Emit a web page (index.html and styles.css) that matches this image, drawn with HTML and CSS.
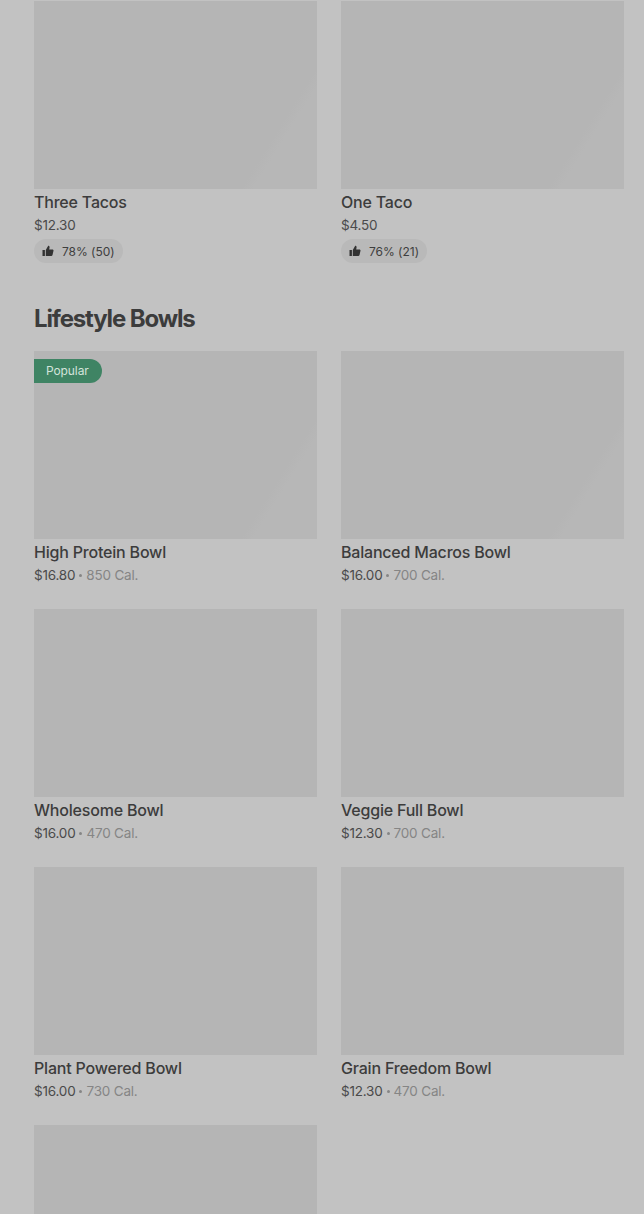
FILE: index.html
```html
<!DOCTYPE html>
<html lang="en">
<head>
  <meta charset="UTF-8" />
  <title>Lifestyle Bowls</title>
  <link rel="stylesheet" href="styles.css">
</head>
<body>

<svg class="icon-defs" width="0" height="0">
  <symbol id="thumb" viewBox="0 0 12 12">
    <path d="M0.5 5h2.4v6H0.5zM3.8 11V4.9L6.2 0.8c0.9 0 1.4 0.6 1.4 1.4L7.2 4.4h3.2c0.8 0 1.3 0.6 1.1 1.4l-1 4.2c-0.2 0.6-0.6 1-1.2 1z" />
  </symbol>
</svg>

<main>
  <div class="grid">
    <div class="item">
      <div class="photo photo-fade"></div>
      <div class="name">Three Tacos</div>
      <div class="meta"><span class="price">$12.30</span></div>
      <div class="rating"><svg class="thumb"><use href="#thumb" /></svg>78% (50)</div>
    </div>
    <div class="item">
      <div class="photo photo-fade"></div>
      <div class="name">One Taco</div>
      <div class="meta"><span class="price">$4.50</span></div>
      <div class="rating"><svg class="thumb"><use href="#thumb" /></svg>76% (21)</div>
    </div>
  </div>

  <h2 class="section-title">Lifestyle Bowls</h2>

  <div class="grid">
    <div class="item">
      <div class="photo photo-fade"><span class="badge">Popular</span></div>
      <div class="name">High Protein Bowl</div>
      <div class="meta"><span class="price">$16.80</span><span class="dot"></span>850 Cal.</div>
    </div>
    <div class="item">
      <div class="photo photo-fade"></div>
      <div class="name">Balanced Macros Bowl</div>
      <div class="meta"><span class="price">$16.00</span><span class="dot"></span>700 Cal.</div>
    </div>
    <div class="item">
      <div class="photo"></div>
      <div class="name">Wholesome Bowl</div>
      <div class="meta"><span class="price">$16.00</span><span class="dot"></span>470 Cal.</div>
    </div>
    <div class="item">
      <div class="photo"></div>
      <div class="name">Veggie Full Bowl</div>
      <div class="meta"><span class="price">$12.30</span><span class="dot"></span>700 Cal.</div>
    </div>
    <div class="item">
      <div class="photo"></div>
      <div class="name">Plant Powered Bowl</div>
      <div class="meta"><span class="price">$16.00</span><span class="dot"></span>730 Cal.</div>
    </div>
    <div class="item">
      <div class="photo"></div>
      <div class="name">Grain Freedom Bowl</div>
      <div class="meta"><span class="price">$12.30</span><span class="dot"></span>470 Cal.</div>
    </div>
    <div class="item">
      <div class="photo"></div>
    </div>
  </div>
</main>

</body>
</html>
```

FILE: styles.css
```css
html, body {
  height: 1214px;
  overflow: hidden;
}
body {
  background: #c2c2c2;
  color: #3c3c3c;
  font-family: Inter, "Liberation Sans", sans-serif;
  margin: 0;
}
.icon-defs {
  display: block;
}
main {
  padding: 1px 20px 0 34px;
}
.grid {
  display: grid;
  grid-template-columns: 283px 283px;
  column-gap: 24px;
  row-gap: 20px;
}
.photo {
  background: #b5b5b5;
  height: 188px;
  padding-top: 8px;
  box-sizing: border-box;
}
.photo-fade {
  background: linear-gradient(122deg, #b5b5b5 0%, #b5b5b5 81%, #b7b7b7 84%, #b7b7b7 100%);
}
.badge {
  display: inline-block;
  background: #3f8464;
  color: #d3e3db;
  font-size: 12px;
  letter-spacing: -0.1px;
  line-height: 24px;
  height: 24px;
  padding: 0 13px 0 12px;
  border-radius: 0 12px 12px 0;
}
.name {
  font-size: 16px;
  font-weight: 500;
  letter-spacing: -0.2px;
  line-height: 20px;
  margin-top: 3px;
  height: 22px;
}
.meta {
  color: #858585;
  font-size: 13.5px;
  letter-spacing: -0.2px;
  line-height: 20px;
  margin-top: 1px;
  height: 24px;
}
.price {
  color: #4a4a4a;
}
.dot {
  display: inline-block;
  width: 3px;
  height: 3px;
  border-radius: 50%;
  background: #858585;
  margin: 0 4px;
  vertical-align: 3px;
}
.rating {
  display: inline-flex;
  align-items: center;
  gap: 8px;
  background: #b9b9b9;
  color: #3e3e3e;
  font-size: 12px;
  letter-spacing: -0.02px;
  height: 24px;
  padding: 0 8px;
  border-radius: 12px;
}
.thumb {
  width: 12px;
  height: 12px;
  fill: #333;
}
.section-title {
  font-size: 24px;
  font-weight: 700;
  letter-spacing: -1.15px;
  line-height: 32px;
  margin: 40px 0 16px;
}
```
